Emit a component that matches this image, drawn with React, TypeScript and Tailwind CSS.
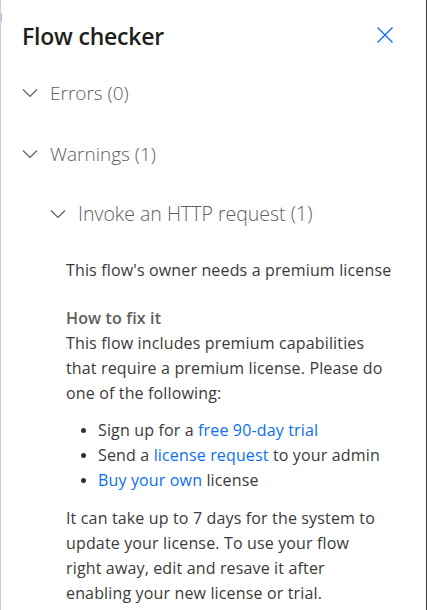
import React from "react";

const Chevron = () => (
  <svg width="16" height="16" viewBox="0 0 16 16" fill="none">
    <path d="M1 4.5 L8 11.5 L15 4.5" stroke="#605e5c" strokeWidth="1.2" />
  </svg>
);

const Dot = () => <span className="w-[5px] h-[5px] rounded-full bg-[#323130] mr-[12px] shrink-0" />;

export default function App() {
  return (
    <div
      className="relative w-[427px] h-[610px] bg-white overflow-hidden border-l border-l-[#d0d0d0] border-r border-r-[#3b3b3b] text-[#3b3a39]"
      style={{ fontFamily: '"Open Sans", "Noto Sans", sans-serif' }}
    >
      <div className="absolute left-[-1px] top-[13px] w-[2px] h-[9px] bg-[#c4b0f2]" />
      <div className="flex items-center justify-between pl-[21px] pr-[32px] pt-[17px] h-[54px]">
        <h1 className="text-[23px] font-semibold text-[#201f1e] leading-[32px] tracking-[-0.2px]">Flow checker</h1>
        <svg width="18" height="18" viewBox="0 0 18 18" fill="none" className="mt-[-2px]">
          <path d="M1.5 1.5 L16.5 16.5 M16.5 1.5 L1.5 16.5" stroke="#0b6ff2" strokeWidth="1.4" />
        </svg>
      </div>
      <div className="mt-[25px] flex items-center h-[28px] pl-[21px] text-[#605e5c]">
        <Chevron />
        <span className="ml-[12px] text-[19px] font-light">Errors (0)</span>
      </div>
      <div className="mt-[33px] flex items-center h-[28px] pl-[21px] text-[#605e5c]">
        <Chevron />
        <span className="ml-[12px] text-[19px] font-light">Warnings (1)</span>
      </div>
      <div className="mt-[32px] flex items-center h-[28px] pl-[49px] text-[#605e5c]">
        <Chevron />
        <span className="ml-[12px] text-[19.5px] font-light">Invoke an HTTP request (1)</span>
      </div>
      <div className="pl-[65px] pr-[10px] text-[16px] leading-[25px] tracking-[0.15px]">
        <p className="mt-[30px] whitespace-nowrap">This flow's owner needs a premium license</p>
        <p className="mt-[23px] font-semibold text-[#605e5c]">How to fix it</p>
        <p className="whitespace-nowrap">
          This flow includes premium capabilities
          <br />
          that require a premium license. Please do
          <br />
          one of the following:
        </p>
        <ul className="mt-[12px] pl-[15px]">
          <li className="flex items-center whitespace-nowrap">
            <Dot />
            <span>Sign up for a <span className="text-[#0b6ff2]">free 90-day trial</span></span>
          </li>
          <li className="flex items-center whitespace-nowrap">
            <Dot />
            <span>Send a <span className="text-[#0b6ff2]">license request</span> to your admin</span>
          </li>
          <li className="flex items-center whitespace-nowrap">
            <Dot />
            <span><span className="text-[#0b6ff2]">Buy your own</span> license</span>
          </li>
        </ul>
        <p className="mt-[13px] whitespace-nowrap">
          It can take up to 7 days for the system to
          <br />
          update your license. To use your flow
          <br />
          right away, edit and resave it after
          <br />
          enabling your new license or trial.
        </p>
      </div>
    </div>
  );
}
